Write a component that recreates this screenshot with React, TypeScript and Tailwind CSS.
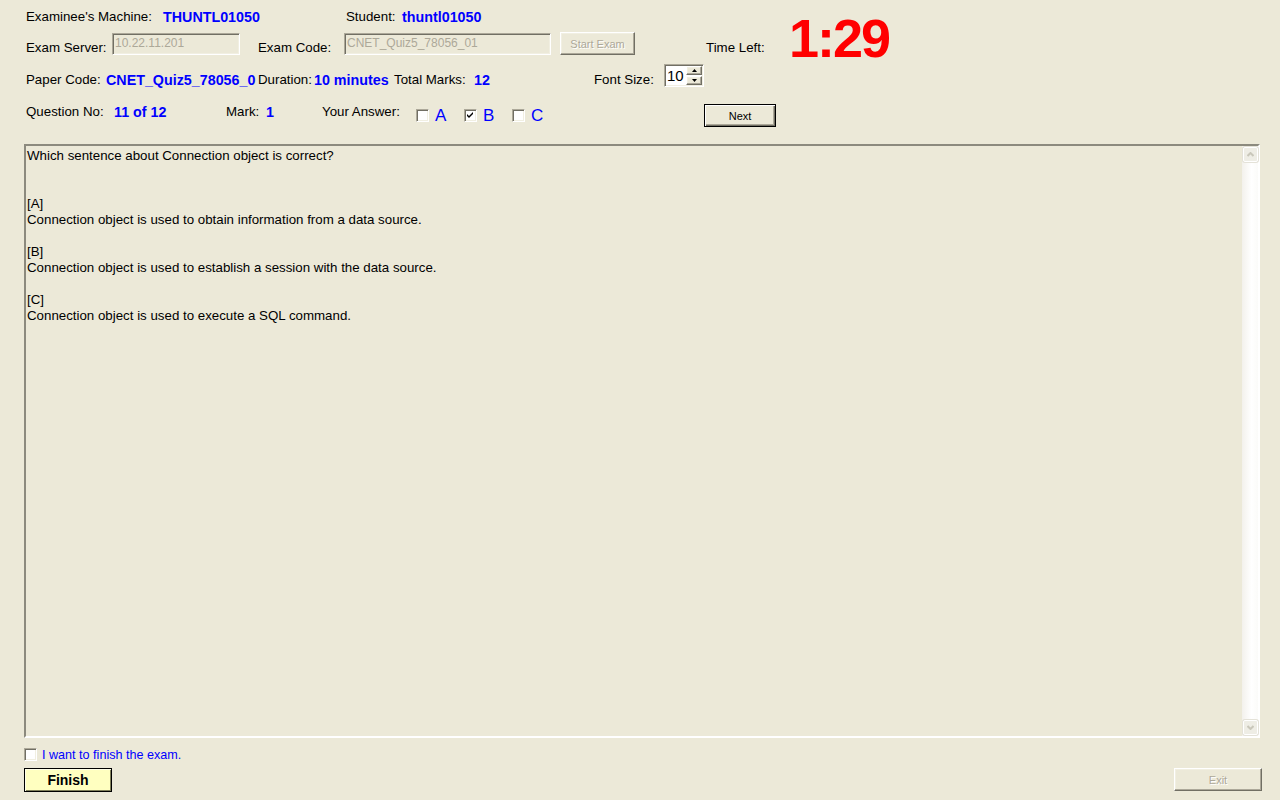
import React from "react";

const sunken =
  "border border-t-[#ACA899] border-l-[#ACA899] border-b-white border-r-white shadow-[inset_1px_1px_0_#716F64,inset_-1px_-1px_0_#F1EFE2]";
const raised =
  "border border-t-white border-l-white border-b-[#716F64] border-r-[#716F64] shadow-[inset_-1px_-1px_0_#ACA899,inset_1px_1px_0_#F1EFE2]";
const value = "font-bold text-[14.3px] text-[#0000FF] whitespace-nowrap";

function CheckBox({ checked = false }: { checked?: boolean }) {
  return (
    <div className={`w-[13px] h-[13px] bg-white shrink-0 flex items-center justify-center ${sunken}`}>
      {checked ? (
        <svg width="7" height="7" viewBox="0 0 7 7">
          <path d="M0 2 L2 4 L6 0 L6 2 L2 6 L0 4 Z" fill="#000" />
        </svg>
      ) : null}
    </div>
  );
}

function Answer({ letter, checked }: { letter: string; checked?: boolean }) {
  return (
    <div className="w-[48px] flex items-start">
      <div className="mt-[5px]">
        <CheckBox checked={checked} />
      </div>
      <span className="ml-[6px] mt-[4px] text-[17px] leading-[16px] text-[#0000FF]">{letter}</span>
    </div>
  );
}

function Chevron({ up }: { up?: boolean }) {
  return (
    <svg width="7" height="5" viewBox="0 0 7 5">
      <path
        d={up ? "M0.5 4 L3.5 1 L6.5 4" : "M0.5 1 L3.5 4 L6.5 1"}
        stroke="#C9C7BA"
        strokeWidth="2"
        fill="none"
      />
    </svg>
  );
}

function ScrollButton({ up }: { up?: boolean }) {
  return (
    <div className="w-[15px] h-[15px] rounded-[2px] border border-white bg-[#EEEDE5] shadow-[0_0_0_1px_#E4E2D8] flex items-center justify-center">
      <Chevron up={up} />
    </div>
  );
}

const question = [
  "Which sentence about Connection object is correct?",
  "",
  "",
  "[A]",
  "Connection object is used to obtain information from a data source.",
  "",
  "[B]",
  "Connection object is used to establish a session with the data source.",
  "",
  "[C]",
  "Connection object is used to execute a SQL command.",
];

export default function App() {
  return (
    <div
      className="w-[1280px] h-[800px] bg-[#ECE9D8] text-black text-[13.3px] leading-[16px] flex flex-col overflow-hidden"
      style={{ fontFamily: '"Liberation Sans", Arial, sans-serif' }}
    >
      {/* row 1 */}
      <div className="flex h-[16px] mt-[9px] pl-[26px]">
        <div className="w-[137px]">Examinee's Machine:</div>
        <div className={`w-[183px] ${value}`}>THUNTL01050</div>
        <div className="w-[56px]">Student:</div>
        <div className={value}>thuntl01050</div>
      </div>

      {/* row 2 */}
      <div className="flex items-start h-[23px] mt-[7px] pl-[26px]">
        <div className="w-[86px] mt-[8px]">Exam Server:</div>
        <div className={`w-[128px] h-[22px] mt-[1px] px-[2px] text-[12px] leading-[18px] text-[#ACA899] ${sunken}`}>
          10.22.11.201
        </div>
        <div className="ml-[18px] w-[86px] mt-[8px]">Exam Code:</div>
        <div className={`w-[207px] h-[22px] mt-[1px] px-[2px] text-[12px] leading-[18px] text-[#ACA899] ${sunken}`}>
          CNET_Quiz5_78056_01
        </div>
        <div
          className={`ml-[9px] w-[75px] h-[23px] flex items-center justify-center text-[11px] text-[#ACA899] [text-shadow:1px_1px_0_#fff] ${raised}`}
        >
          Start Exam
        </div>
        <div className="ml-[71px] w-[83px] mt-[8px]">Time Left:</div>
        <div className="-mt-[22px] h-[23px] text-[54px] leading-[56px] font-bold text-[#FF0000] tracking-[-2px]">
          1:29
        </div>
      </div>

      {/* row 3 */}
      <div className="flex items-start h-[23px] mt-[9px] pl-[26px]">
        <div className="w-[80px] mt-[8px]">Paper Code:</div>
        <div className={`w-[152px] mt-[8px] ${value}`}>CNET_Quiz5_78056_0</div>
        <div className="w-[56px] mt-[8px]">Duration:</div>
        <div className={`w-[80px] mt-[8px] ${value}`}>10 minutes</div>
        <div className="w-[80px] mt-[8px]">Total Marks:</div>
        <div className={`w-[120px] mt-[8px] ${value}`}>12</div>
        <div className="w-[70px] mt-[8px]">Font Size:</div>
        <div className={`w-[40px] h-[23px] bg-white flex items-center ${sunken}`}>
          <span className="flex-1 pl-[2px] text-[15px] leading-[18px]">10</span>
          <div className="flex flex-col gap-[1px] mr-[1px]">
            <div className={`w-[16px] h-[9px] bg-[#ECE9D8] flex items-center justify-center ${raised}`}>
              <svg width="5" height="3" viewBox="0 0 5 3">
                <path d="M2.5 0 L5 3 L0 3 Z" fill="#000" />
              </svg>
            </div>
            <div className={`w-[16px] h-[9px] bg-[#ECE9D8] flex items-center justify-center ${raised}`}>
              <svg width="5" height="3" viewBox="0 0 5 3">
                <path d="M0 0 L5 0 L2.5 3 Z" fill="#000" />
              </svg>
            </div>
          </div>
        </div>
      </div>

      {/* row 4 */}
      <div className="flex items-start h-[23px] mt-[17px] pl-[26px]">
        <div className="w-[88px]">Question No:</div>
        <div className={`w-[112px] ${value}`}>11 of 12</div>
        <div className="w-[40px]">Mark:</div>
        <div className={`w-[56px] ${value}`}>1</div>
        <div className="w-[94px]">Your Answer:</div>
        <Answer letter="A" />
        <Answer letter="B" checked />
        <Answer letter="C" />
        <div
          className="ml-[144px] w-[72px] h-[23px] flex items-center justify-center text-[11px] border border-black shadow-[inset_1px_1px_0_#fff,inset_-1px_-1px_0_#716F64,inset_-2px_-2px_0_#ACA899]"
        >
          Next
        </div>
      </div>

      {/* question area */}
      <div className="mt-[17px] ml-[24px] w-[1236px] h-[594px] flex border-2 border-t-[#8C8A7E] border-l-[#8C8A7E] border-b-white border-r-white">
        <div className="flex-1 pl-[1px] pt-[2px]">
          {question.map((line, i) => (
            <div key={i} className="h-[16px] whitespace-pre">
              {line}
            </div>
          ))}
        </div>
        <div className="w-[16px] flex flex-col justify-between items-center py-[1px] bg-[linear-gradient(to_right,#F3F1EC,#FFFFFF_60%,#FBFBF9)]">
          <ScrollButton up />
          <ScrollButton />
        </div>
      </div>

      {/* finish */}
      <div className="flex items-start mt-[10px] pl-[24px]">
        <CheckBox />
        <span className="ml-[5px] -mt-[1px] text-[12.6px] text-[#0000FF]">I want to finish the exam.</span>
      </div>
      <div className="flex justify-between mt-[5px] pl-[24px] pr-[18px]">
        <div className="w-[88px] h-[24px] flex items-center justify-center bg-[#FFFFC0] font-bold text-[14px] border border-black shadow-[inset_1px_1px_0_#FFFFE8,inset_-1px_-1px_0_#80805A]">
          Finish
        </div>
        <div
          className={`w-[88px] h-[23px] flex items-center justify-center text-[11px] text-[#ACA899] [text-shadow:1px_1px_0_#fff] ${raised}`}
        >
          Exit
        </div>
      </div>
    </div>
  );
}
